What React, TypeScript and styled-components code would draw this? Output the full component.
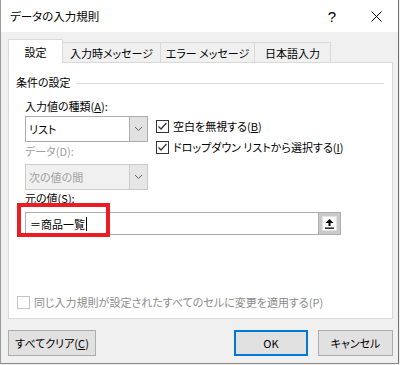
import styled, { createGlobalStyle } from 'styled-components';

const GlobalStyle = createGlobalStyle`
  html, body {
    margin: 0;
    padding: 0;
    background: #f0f0f0;
  }
  body {
    font-family: "Noto Sans CJK JP", "Noto Sans", sans-serif;
    font-size: 11px;
    color: #000;
    font-feature-settings: "palt";
  }
`;

const Window = styled.div`
  box-sizing: border-box;
  width: 399px;
  height: 364px;
  background: #f0f0f0;
  border-left: 1px solid #9a9a9a;
  border-right: 1px solid #707070;
  border-bottom: 1px solid #8a8a8a;
  display: flex;
  flex-direction: column;
`;

const TitleBar = styled.div`
  height: 32px;
  background: #fff;
  display: flex;
  align-items: center;
  padding-left: 9px;
  flex-shrink: 0;
`;

const Title = styled.div`
  flex: 1;
  line-height: 16px;
  font-size: 11.5px;
`;

const TitleButton = styled.div`
  width: 44px;
  height: 32px;
  display: flex;
  align-items: center;
  justify-content: center;
  font-family: "Liberation Sans", sans-serif;
  font-size: 15px;
`;

const Body = styled.div`
  padding: 7px 0 0 7px;
  display: flex;
  flex-direction: column;
`;

const TabRow = styled.div`
  display: flex;
  align-items: flex-end;
  height: 23px;
`;

const Tab = styled.div<{ $active?: boolean; $w: number }>`
  box-sizing: border-box;
  width: ${(p) => p.$w}px;
  height: ${(p) => (p.$active ? 24 : 20)}px;
  margin-bottom: ${(p) => (p.$active ? -1 : 0)}px;
  margin-left: ${(p) => (p.$active ? 0 : -1)}px;
  position: relative;
  z-index: ${(p) => (p.$active ? 1 : 0)};
  background: ${(p) => (p.$active ? '#fff' : '#f0f0f0')};
  border: 1px solid #d9d9d9;
  border-bottom: none;
  display: flex;
  align-items: center;
  justify-content: center;
  padding-top: ${(p) => (p.$active ? 0 : 1)}px;
  line-height: 14px;
`;

const Panel = styled.div`
  box-sizing: border-box;
  width: 385px;
  height: 257px;
  background: #fff;
  border: 1px solid #d9d9d9;
  display: flex;
  flex-direction: column;
`;

const GroupHeader = styled.div`
  display: flex;
  align-items: center;
  gap: 5px;
  margin: 11px 8px 0 7px;
  line-height: 16px;
  height: 16px;

  .line {
    flex: 1;
    height: 1px;
    margin-top: 3px;
    background: #dcdcdc;
  }
`;

const Fields = styled.div`
  padding-left: 16px;
  display: flex;
  flex-direction: column;
`;

const Label = styled.div<{ $disabled?: boolean; $top: number }>`
  line-height: 16px;
  height: 16px;
  margin-top: ${(p) => p.$top}px;
  color: ${(p) => (p.$disabled ? '#a0a0a0' : '#000')};

  u {
    text-underline-offset: 1px;
  }
`;

const FieldsRow = styled.div`
  display: flex;
  gap: 8px;
  margin-top: 2px;
`;

const Column = styled.div`
  display: flex;
  flex-direction: column;
`;

const CheckColumn = styled.div`
  display: flex;
  flex-direction: column;
  gap: 8px;
  padding-top: 4px;
`;

const Select = styled.div<{ $disabled?: boolean; $top?: number }>`
  box-sizing: border-box;
  width: 123px;
  height: 26px;
  margin-top: ${(p) => p.$top ?? 0}px;
  display: flex;
  border: 1px solid ${(p) => (p.$disabled ? '#cccccc' : '#adadad')};
  background: ${(p) => (p.$disabled ? '#f0f0f0' : '#fff')};
  color: ${(p) => (p.$disabled ? '#a0a0a0' : '#000')};

  .value {
    flex: 1;
    display: flex;
    align-items: center;
    padding-left: 3px;
  }
  .arrow {
    width: 17px;
    display: flex;
    align-items: center;
    justify-content: center;
    background: ${(p) => (p.$disabled ? '#e6e6e6' : '#e1e1e1')};
    border-left: 1px solid ${(p) => (p.$disabled ? '#cccccc' : '#adadad')};
  }
`;

const CheckRow = styled.div<{ $disabled?: boolean }>`
  display: flex;
  align-items: center;
  gap: 4px;
  height: 13px;
  line-height: 13px;
  color: ${(p) => (p.$disabled ? '#8c8c8c' : '#000')};

  u {
    text-underline-offset: 1px;
  }
`;

const Box = styled.div<{ $disabled?: boolean }>`
  box-sizing: border-box;
  width: 13px;
  height: 13px;
  border: 1px solid ${(p) => (p.$disabled ? '#c4c4c4' : '#333')};
  background: #fff;
  display: flex;
  align-items: center;
  justify-content: center;
  flex-shrink: 0;
`;

const SourceField = styled.div`
  position: relative;
  margin-top: 6px;
  width: 316px;
  height: 23px;
  box-sizing: border-box;
  border: 1px solid #adadad;
  display: flex;
`;

const SourceText = styled.div`
  flex: 1;
  display: flex;
  align-items: center;
  padding-left: 4px;

  .caret {
    width: 1px;
    height: 14px;
    background: #000;
    margin-left: 1px;
  }
`;

const CollapseButton = styled.div`
  width: 22px;
  box-sizing: border-box;
  background: #c9c9c9;
  border-left: 1px solid #adadad;
  padding: 3px;
  display: flex;

  .inner {
    flex: 1;
    background: #fff;
    border: 1px solid #e3e3e3;
    display: flex;
    align-items: center;
    justify-content: center;
  }
`;

const Highlight = styled.div`
  position: absolute;
  left: -9px;
  top: -10px;
  width: 93px;
  height: 34px;
  box-sizing: border-box;
  border: 4px solid #ec1c24;
  pointer-events: none;
`;

const ApplyAll = styled.div`
  margin: auto 0 9px 8px;
`;

const Footer = styled.div`
  width: 385px;
  margin-top: 11px;
  display: flex;
  justify-content: space-between;

  .right {
    display: flex;
    gap: 10px;
  }
`;

const Button = styled.div<{ $w: number; $default?: boolean }>`
  box-sizing: border-box;
  width: ${(p) => p.$w}px;
  height: 26px;
  background: #e1e1e1;
  border: ${(p) => (p.$default ? '2px solid #0078d7' : '1px solid #adadad')};
  display: flex;
  align-items: center;
  justify-content: center;

  u {
    text-underline-offset: 1px;
  }
`;

const Chevron = ({ color }: { color: string }) => (
  <svg width="9" height="6" viewBox="0 0 9 6">
    <polyline points="1,1 4.5,4.5 8,1" fill="none" stroke={color} strokeWidth="1" />
  </svg>
);

const Check = () => (
  <svg width="11" height="11" viewBox="0 0 11 11">
    <polyline points="1.5,5.5 4,8 9.5,2" fill="none" stroke="#333" strokeWidth="1.3" />
  </svg>
);

const App = () => {
  return (
    <>
      <GlobalStyle />
      <Window>
        <TitleBar>
          <Title>データの入力規則</Title>
          <TitleButton>?</TitleButton>
          <TitleButton>
            <svg width="11" height="11" viewBox="0 0 11 11">
              <path d="M0.5 0.5 L10.5 10.5 M10.5 0.5 L0.5 10.5" stroke="#000" strokeWidth="1" />
            </svg>
          </TitleButton>
        </TitleBar>
        <Body>
          <TabRow>
            <Tab $active $w={55}>設定</Tab>
            <Tab $w={99}>入力時メッセージ</Tab>
            <Tab $w={95}>エラー メッセージ</Tab>
            <Tab $w={77}>日本語入力</Tab>
          </TabRow>
          <Panel>
            <GroupHeader>
              <span>条件の設定</span>
              <div className="line" />
            </GroupHeader>
            <Fields>
              <Label $top={8}>
                入力値の種類(<u>A</u>):
              </Label>
              <FieldsRow>
                <Column>
                  <Select>
                    <div className="value">リスト</div>
                    <div className="arrow">
                      <Chevron color="#606060" />
                    </div>
                  </Select>
                  <Label $disabled $top={1}>
                    データ(D):
                  </Label>
                  <Select $disabled $top={5}>
                    <div className="value">次の値の間</div>
                    <div className="arrow">
                      <Chevron color="#606060" />
                    </div>
                  </Select>
                </Column>
                <CheckColumn>
                  <CheckRow>
                    <Box>
                      <Check />
                    </Box>
                    <span>
                      空白を無視する(<u>B</u>)
                    </span>
                  </CheckRow>
                  <CheckRow>
                    <Box>
                      <Check />
                    </Box>
                    <span>
                      ドロップダウン リストから選択する(<u>I</u>)
                    </span>
                  </CheckRow>
                </CheckColumn>
              </FieldsRow>
              <Label $top={0}>
                元の値(<u>S</u>):
              </Label>
              <SourceField>
                <SourceText>
                  <span>＝商品一覧</span>
                  <span className="caret" />
                </SourceText>
                <CollapseButton>
                  <div className="inner">
                    <svg width="9" height="10" viewBox="0 0 9 10">
                      <path d="M4.5 0 L8.5 4 L5.5 4 L5.5 7 L3.5 7 L3.5 4 L0.5 4 Z" fill="#000" />
                      <rect x="0" y="8.5" width="9" height="1.3" fill="#000" />
                    </svg>
                  </div>
                </CollapseButton>
                <Highlight />
              </SourceField>
            </Fields>
            <ApplyAll>
              <CheckRow $disabled>
                <Box $disabled />
                <span>同じ入力規則が設定されたすべてのセルに変更を適用する(P)</span>
              </CheckRow>
            </ApplyAll>
          </Panel>
          <Footer>
            <Button $w={88}>
              すべてクリア(<u>C</u>)
            </Button>
            <div className="right">
              <Button $w={74} $default>
                OK
              </Button>
              <Button $w={75}>キャンセル</Button>
            </div>
          </Footer>
        </Body>
      </Window>
    </>
  );
};

export default App;
